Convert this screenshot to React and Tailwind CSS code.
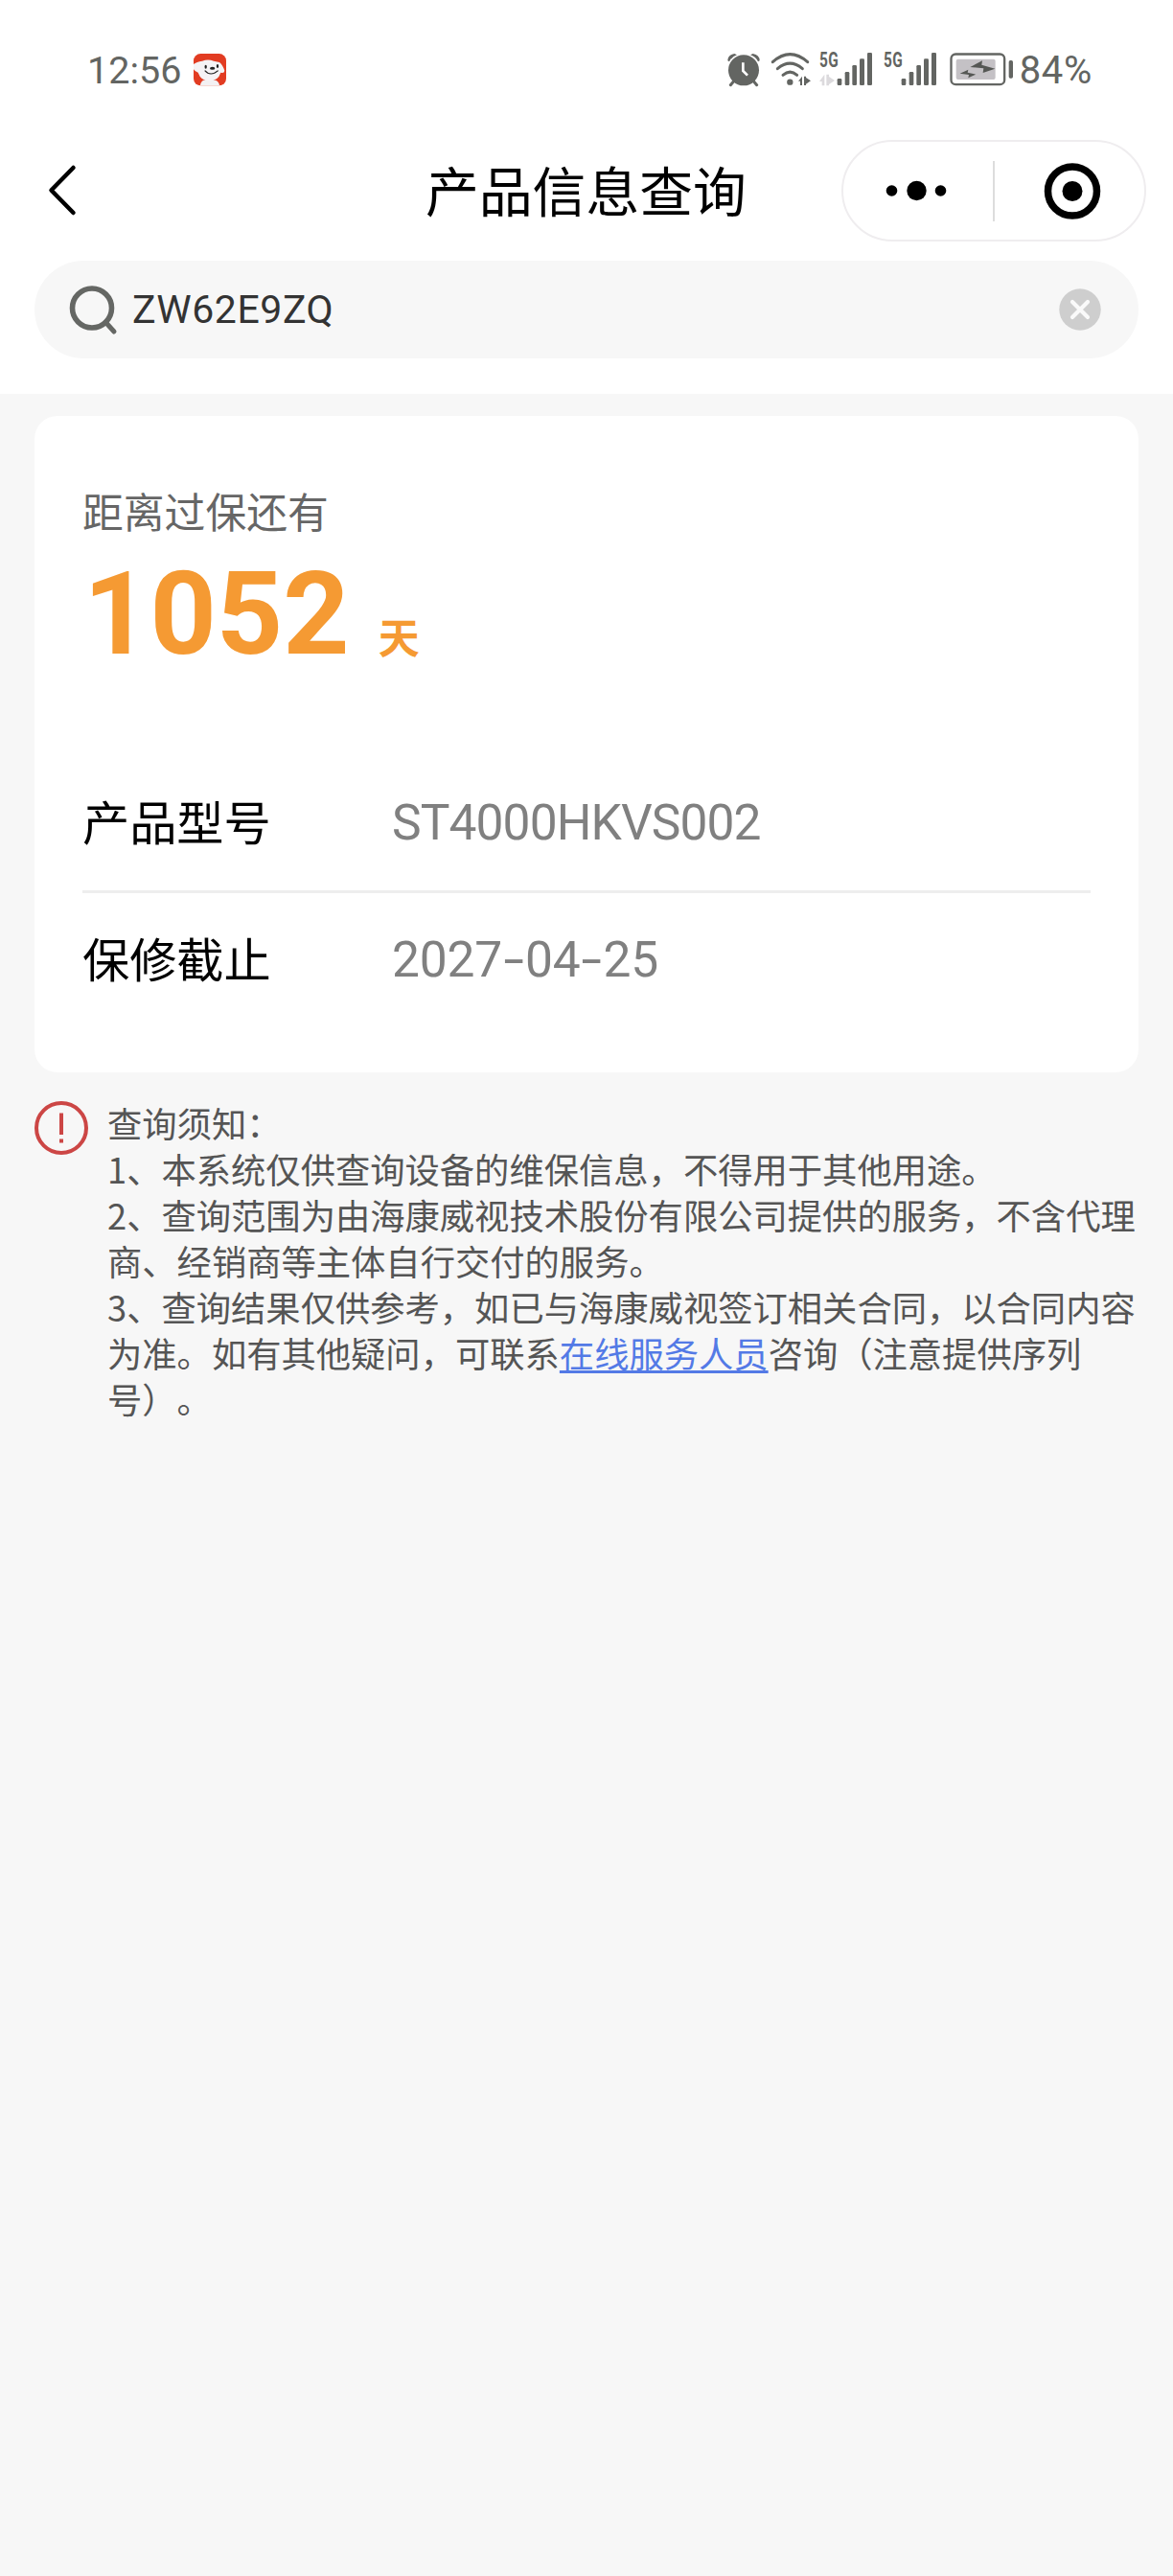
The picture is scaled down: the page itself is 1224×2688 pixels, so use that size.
import React from "react";

const CJK = "font-['Noto_Sans_CJK_SC',sans-serif]";
const LATIN = "font-['Roboto','Noto_Sans_CJK_SC',sans-serif]";

function AppBadge() {
  return (
    <svg className="ml-[12px] h-[35px] w-[36px]" viewBox="0 0 108 105">
      <rect x="3" y="3" width="102" height="100" rx="22" fill="#e23c22" />
      <path d="M24 103Q24 92 34 86H72Q84 92 84 103Z" fill="#f3f1f3" />
      <path
        d="M3 36Q12 28 30 26Q48 19 66 26L84 30Q94 38 100 56Q99 66 88 62Q80 88 52 89Q26 88 17 62Q8 60 3 52Z"
        fill="#f5f3f5"
      />
      <ellipse cx="41" cy="44" rx="3.500" ry="6" fill="#222" />
      <ellipse cx="78" cy="42" rx="3.500" ry="6" fill="#222" />
      <ellipse cx="62" cy="49" rx="8" ry="4.500" fill="#222" />
      <path d="M38 56Q56 76 80 56" fill="none" stroke="#222" strokeWidth="3.500" />
    </svg>
  );
}

function AlarmIcon() {
  return (
    <svg className="h-[36px] w-[36px]" viewBox="51 75 108 108">
      <path d="M55 100Q55 82 76 78L84 82Q66 88 60 103Z M155 100Q155 82 134 78L126 82Q144 88 150 103Z" fill="#636562" />
      <circle cx="105" cy="130" r="48" fill="#636562" />
      <path d="M76 162L64 176M134 162L146 176" stroke="#636562" strokeWidth="9" strokeLinecap="round" />
      <path d="M103 106V132L117 146" fill="none" stroke="#fff" strokeWidth="8" />
    </svg>
  );
}

function WifiIcon() {
  return (
    <svg className="ml-[10px] h-[36px] w-[43px]" viewBox="189 75 129 108">
      <g fill="none" stroke="#636562" strokeWidth="9" strokeLinecap="round">
        <path d="M196 104Q250 56 305 104" />
        <path d="M211 125Q250 92 289 125" />
        <path d="M228 145Q250 126 272 145" />
      </g>
      <circle cx="250" cy="167" r="9.500" fill="#636562" />
      <path d="M276 164L288 149V177H282V164ZM294 149H300V177H294ZM300 153L315 163L300 173Z" fill="#636562" />
    </svg>
  );
}

function SignalIcon({ arrows }) {
  return (
    <div className="relative h-[36px] w-[57px]">
      <span className={`${LATIN} absolute left-px top-0 origin-top-left scale-x-[0.7] text-[22px] font-bold leading-[16px] tracking-[0.5px] text-[#636562]`}>
        5G
      </span>
      <svg className="h-[36px] w-[57px]" viewBox="339 75 171 108">
        {arrows && <path d="M342 165L358 143V178H350V165ZM364 143H372V178H364ZM372 150L390 162L372 174Z" fill="#dcdadd" />}
        <g fill="#636562">
          <rect x="398" y="156" width="14" height="21" rx="4" />
          <rect x="422" y="135" width="14" height="42" rx="4" />
          <rect x="445" y="114" width="14" height="63" rx="4" />
          <rect x="468" y="94" width="15" height="83" rx="4" />
          <rect x="492" y="75" width="15" height="102" rx="4" />
        </g>
      </svg>
    </div>
  );
}

function BatteryIcon() {
  return (
    <svg className="ml-[13px] h-[36px] w-[67px]" viewBox="748 75 201 108">
      <rect x="752.500" y="79.500" width="167" height="95" rx="14" fill="none" stroke="#636562" strokeWidth="7" />
      <rect x="768" y="95" width="123" height="64" rx="6" fill="#c4c1c5" />
      <rect x="933" y="99" width="13" height="56" rx="5" fill="#636562" />
      <path d="M812 120L850 100L848 113L890 125L852 138L854 124Z" fill="#555754" />
      <path d="M780 140L806 128L804 137L830 143L806 154L808 144Z" fill="#555754" />
    </svg>
  );
}

function StatusBar() {
  return (
    <div className="flex h-[145px] items-start justify-between pl-[91px] pr-[84px] pt-[55px] text-[#636562]">
      <div className="flex items-start">
        <span className={`${LATIN} mt-px text-[39.500px] leading-[36px]`}>12:56</span>
        <AppBadge />
      </div>
      <div className="flex items-start">
        <AlarmIcon />
        <WifiIcon />
        <div className="ml-[7px] flex gap-[10px]">
          <SignalIcon arrows />
          <SignalIcon />
        </div>
        <BatteryIcon />
        <span className={`${LATIN} ml-[6px] mt-px text-[40px] leading-[36px] tracking-[0.7px]`}>84%</span>
      </div>
    </div>
  );
}

function NavBar() {
  return (
    <div className="flex h-[108px] items-center pl-[47px] pr-[28px]">
      <svg className="h-[56px] w-[36px]" viewBox="0 0 36 56" fill="none" stroke="#000" strokeWidth="4.500" strokeLinecap="round" strokeLinejoin="round">
        <path d="M29.500 4L6.500 27.500L29.500 51" />
      </svg>
      <h1 className={`${CJK} -mt-[5px] ml-[361px] text-[55.800px] leading-[80px] text-black`}>产品信息查询</h1>
      <div className="ml-auto flex h-[106px] w-[318px] items-center rounded-full border-2 border-[#efedef]">
        <svg className="h-[24px] w-[156px]" viewBox="0 0 156 24">
          <circle cx="50.500" cy="12" r="5.800" />
          <circle cx="76.500" cy="12" r="10.200" />
          <circle cx="101.500" cy="12" r="5.800" />
        </svg>
        <div className="h-[63px] w-[2px] bg-[#dddddd]" />
        <svg className="ml-[50px] h-[62px] w-[62px]" viewBox="0 0 62 62">
          <circle cx="31" cy="31.500" r="25.500" fill="none" stroke="#000" strokeWidth="7.500" />
          <circle cx="31" cy="31.500" r="10.500" />
        </svg>
      </div>
    </div>
  );
}

function SearchBar() {
  return (
    <div className="mx-[36px] mt-[19px] flex h-[102px] items-center rounded-full bg-[#f7f7f7] pl-[34px] pr-[39px]">
      <svg className="h-[56px] w-[54px]" viewBox="0 0 54 56" fill="none" stroke="#656764" strokeWidth="5.600">
        <circle cx="26" cy="26.500" r="20.500" />
        <path d="M40 41L49 51" strokeLinecap="round" strokeWidth="5" />
      </svg>
      <span className={`${LATIN} ml-[14px] flex-1 text-[41px] leading-[50px] tracking-[0.6px] text-[#333]`}>ZW62E9ZQ</span>
      <svg className="h-[44px] w-[44px]" viewBox="0 0 44 44">
        <circle cx="22" cy="22" r="21.700" fill="#cecece" />
        <path d="M14 14L30 30M30 14L14 30" stroke="#fafafa" strokeWidth="4.200" strokeLinecap="round" />
      </svg>
    </div>
  );
}

function Row({ label, children }) {
  return (
    <div className="flex h-[140px] items-center">
      <span className={`${CJK} -mt-[7px] w-[323px] text-[49.200px] leading-[72px] text-black`}>{label}</span>
      <span className={`${LATIN} text-[51.500px] leading-[60px] text-[#808080]`}>{children}</span>
    </div>
  );
}

function Dash() {
  return <span className="inline-block w-[24px] scale-x-[1.5] text-center">-</span>;
}

function WarrantyCard() {
  return (
    <section className="mx-[36px] mt-[23px] h-[685px] rounded-[24px] bg-white px-[50px] pt-[68px]">
      <p className={`${CJK} text-[42.800px] leading-[60px] text-[#666]`}>距离过保还有</p>
      <div className="mt-[4px] flex items-baseline text-[#f59a33]">
        <span className={`${LATIN} ml-px text-[121px] font-bold leading-[150px]`}>1052</span>
        <span className={`${CJK} ml-[30px] text-[43px] font-bold leading-[60px]`}>天</span>
      </div>
      <div className="mt-[73px]">
        <Row label="产品型号">
          <span className="tracking-[-0.9px]">ST4000HKVS002</span>
        </Row>
        <div className="h-[3px] bg-[#eeeeee]" />
        <Row label="保修截止">
          <span className="tracking-[-0.2px]">2027<Dash />04<Dash />25</span>
        </Row>
      </div>
    </section>
  );
}

function Notice() {
  return (
    <section className="mt-[28px] flex items-start pl-[36px]">
      <svg className="mt-[2px] h-[56px] w-[56px]" viewBox="0 0 56 56" fill="none" stroke="#cc4645" strokeWidth="4">
        <circle cx="28" cy="28" r="26" />
        <path d="M28 12.500V35M28 39.500V43.500" />
      </svg>
      <div className={`${CJK} ml-[20px] whitespace-nowrap text-[36.300px] leading-[48px] text-[#555] [text-spacing-trim:space-all]`}>
        <p>查询须知：</p>
        <p>1、本系统仅供查询设备的维保信息，不得用于其他用途。</p>
        <p>
          2、查询范围为由海康威视技术股份有限公司提供的服务，不含代理
          <br />
          商、经销商等主体自行交付的服务。
        </p>
        <p>
          3、查询结果仅供参考，如已与海康威视签订相关合同，以合同内容
          <br />
          为准。如有其他疑问，可联系
          <a className="text-[#537ae6] underline decoration-[3px] underline-offset-[3px] [text-decoration-skip-ink:none]">在线服务人员</a>
          咨询（注意提供序列
          <br />
          号）。
        </p>
      </div>
    </section>
  );
}

export default function App() {
  return (
    <div className="min-h-[2688px] w-[1224px] bg-[#f7f7f7]">
      <header className="h-[411px] bg-white">
        <StatusBar />
        <NavBar />
        <SearchBar />
      </header>
      <main className="flow-root">
        <WarrantyCard />
        <Notice />
      </main>
    </div>
  );
}
